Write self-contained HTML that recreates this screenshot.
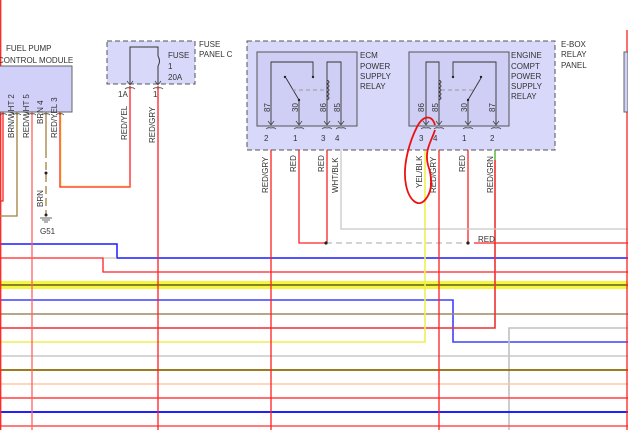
<!DOCTYPE html><html><head><style>body{margin:0;background:#fff}svg{display:block}text{font-family:"Liberation Sans",sans-serif;font-size:8px;fill:#333}</style></head><body>
<svg width="628" height="430" viewBox="0 0 628 430" xmlns="http://www.w3.org/2000/svg">
<g fill="none" stroke-width="1.3">
<path d="M0 244H117V258H628" stroke="#1a1aff" stroke-width="1.5"/>
<path d="M0 258H117" stroke="#b0a070" stroke-width="0.8"/>
<path d="M0 258H103V272H628" stroke="#ff2020"/>
<rect x="0" y="281" width="628" height="8" fill="#f6f640" stroke="none"/>
<path d="M0 285H628" stroke="#606020" stroke-width="1.5"/>
<path d="M0 300H453V342H628" stroke="#4040ff" stroke-width="1.6"/>
<path d="M0 314H628" stroke="#a08860" stroke-width="1.6"/>
<path d="M0 328H495V160" stroke="#ee3030" stroke-width="1.6"/>
<path d="M495 160V125" stroke="#40b020"/>
<path d="M0 342H425V125" stroke="#eeee50" stroke-width="1.6"/>
<path d="M628 328H509V430" stroke="#c0c0c0" stroke-width="1.6"/>
<path d="M0 356H628" stroke="#c8c8c8" stroke-width="1.6"/>
<path d="M0 370H628" stroke="#906800" stroke-width="1.8"/>
<path d="M0 384H628" stroke="#ffc8a0" stroke-width="1.6"/>
<path d="M0 398H628" stroke="#ff4040" stroke-width="1.6"/>
<path d="M0 412H628" stroke="#2020ff" stroke-width="2"/>
<path d="M0 426H628" stroke="#ff5050" stroke-width="1.6"/>
<path d="M0.7 0V430" stroke="#ff2020"/>
<path d="M3 112V201H0" stroke="#ff2020"/>
<path d="M17 112V216H0" stroke="#a08040"/>
<path d="M32 112V430" stroke="#ff6060"/>
<path d="M46 112V150" stroke="#a08040"/>
<path d="M46 150V215" stroke="#a08040" stroke-dasharray="8 4"/>
<path d="M60 112V187H130V86" stroke="#ff2020"/>
<path d="M61 112V186H130" stroke="#f0e000" stroke-width="0.6"/>
<path d="M158 86V430" stroke="#ff2020"/>
<path d="M271 128V430" stroke="#ff2020"/>
<path d="M299 128V243H326M474 243H628" stroke="#ff2020"/>
<path d="M327 128V243" stroke="#ff2020"/>
<path d="M326 243H468" stroke="#bbb" stroke-dasharray="6 4"/>
<path d="M468 128V243" stroke="#ff2020"/>
<path d="M341 128V229H628" stroke="#c8c8c8"/>
<path d="M439 128V430" stroke="#ff2020"/>
<path d="M627 30V430" stroke="#ff2020"/>
</g>
<g fill="#222"><circle cx="46" cy="173" r="1.5"/><circle cx="46" cy="215" r="1.5"/><circle cx="326" cy="243" r="1.6"/><circle cx="468" cy="243" r="1.6"/></g>
<path d="M40 218H52M42 220H50M44 222H48" stroke="#333" stroke-width="0.8"/>
<rect x="-2" y="66" width="74" height="46" fill="#d0d0f8" stroke="#666" stroke-width="1"/>
<text x="6" y="51">FUEL PUMP</text><text x="-2" y="63">CONTROL MODULE</text>
<rect x="107" y="41" width="88" height="43" fill="#d8d8fa" stroke="#555" stroke-dasharray="5 3"/>
<path d="M130 84V47H158V56M158 66V84" fill="none" stroke="#333"/>
<path d="M158 56q3 5 0 10" fill="none" stroke="#333"/>
<text x="168" y="58">FUSE</text><text x="168" y="69">1</text><text x="168" y="80">20A</text>
<text x="199" y="47">FUSE</text><text x="199" y="57">PANEL C</text>
<text x="118" y="97">1A</text><text x="153" y="97">1</text>
<rect x="247" y="41" width="308" height="109" fill="#d8d8fa" stroke="#555" stroke-dasharray="5 3"/>
<rect x="257" y="52" width="100" height="74" fill="#cfcff5" stroke="#555"/>
<rect x="409" y="52" width="100" height="74" fill="#cfcff5" stroke="#555"/>
<g fill="none" stroke="#333" stroke-width="0.9">
<path d="M271 124V62H313V76M299 124V100L286 78M327 124V62H341V124"/>
<path d="M327 80q4 2 0 4q4 2 0 4q4 2 0 4q4 2 0 4q4 2 0 4"/>
<path d="M426 124V62H439V124M468 124V100L481 78M496 124V62H453V76"/>
<path d="M439 80q4 2 0 4q4 2 0 4q4 2 0 4q4 2 0 4q4 2 0 4"/>
</g>
<g fill="none" stroke="#444" stroke-width="0.8">
<path d="M268 121l3 4 3-4M296 121l3 4 3-4M324 121l3 4 3-4M338 121l3 4 3-4M423 121l3 4 3-4M436 121l3 4 3-4M465 121l3 4 3-4M493 121l3 4 3-4"/>
<path d="M266 129q2-2 5-1 3-1 5 1M294 129q2-2 5-1 3-1 5 1M322 129q2-2 5-1 3-1 5 1M336 129q2-2 5-1 3-1 5 1M421 129q2-2 5-1 3-1 5 1M434 129q2-2 5-1 3-1 5 1M463 129q2-2 5-1 3-1 5 1M491 129q2-2 5-1 3-1 5 1"/>
<path d="M127 81l3 4 3-4M155 81l3 4 3-4M125 89q2-2 5-1 3-1 5 1M153 89q2-2 5-1 3-1 5 1"/>
<path d="M0 115q2-2 3-1 2-1 4 1M13 115q2-2 4-1 2-1 4 1M28 115q2-2 4-1 2-1 4 1M42 115q2-2 4-1 2-1 4 1M56 115q2-2 4-1 2-1 4 1"/>
</g>
<path d="M292 90H326M441 90H474" stroke="#999" stroke-dasharray="4 3"/>
<g fill="#222"><circle cx="285" cy="77" r="1.2"/><circle cx="313" cy="77" r="1.2"/><circle cx="299" cy="100" r="1.2"/><circle cx="453" cy="77" r="1.2"/><circle cx="481" cy="77" r="1.2"/><circle cx="468" cy="100" r="1.2"/></g>
<text x="360" y="58">ECM</text><text x="360" y="69">POWER</text><text x="360" y="79">SUPPLY</text><text x="360" y="89">RELAY</text>
<text x="511" y="58">ENGINE</text><text x="511" y="69">COMPT</text><text x="511" y="79">POWER</text><text x="511" y="89">SUPPLY</text><text x="511" y="99">RELAY</text>
<text x="561" y="47">E-BOX</text><text x="561" y="57">RELAY</text><text x="561" y="68">PANEL</text>
<text x="264" y="141">2</text><text x="293" y="141">1</text><text x="321" y="141">3</text><text x="335" y="141">4</text>
<text x="419" y="141">3</text><text x="433" y="141">4</text><text x="462" y="141">1</text><text x="490" y="141">2</text>
<rect x="624" y="52" width="4" height="60" fill="#d0d0f8" stroke="#666"/>
<text x="478" y="242">RED</text>
<g font-size="7.5">
<text transform="translate(14,138) rotate(-90)">BRN/WHT 2</text>
<text transform="translate(29,138) rotate(-90)">RED/WHT 5</text>
<text transform="translate(43,124) rotate(-90)">BRN 4</text>
<text transform="translate(57,138) rotate(-90)">RED/YEL 3</text>
<text transform="translate(43,207) rotate(-90)">BRN</text>
<text transform="translate(127,140) rotate(-90)">RED/YEL</text>
<text transform="translate(155,143) rotate(-90)">RED/GRY</text>
<text transform="translate(268,193) rotate(-90)">RED/GRY</text>
<text transform="translate(296,172) rotate(-90)">RED</text>
<text transform="translate(324,172) rotate(-90)">RED</text>
<text transform="translate(338,193) rotate(-90)">WHT/BLK</text>
<text transform="translate(422,188) rotate(-90)">YEL/BLK</text>
<text transform="translate(436,193) rotate(-90)">RED/GRY</text>
<text transform="translate(465,172) rotate(-90)">RED</text>
<text transform="translate(493,193) rotate(-90)">RED/GRN</text>
<g font-size="6.5">
<text transform="translate(270,112) rotate(-90)">87</text>
<text transform="translate(298,112) rotate(-90)">30</text>
<text transform="translate(326,112) rotate(-90)">86</text>
<text transform="translate(340,112) rotate(-90)">85</text>
<text transform="translate(424,112) rotate(-90)">86</text>
<text transform="translate(438,112) rotate(-90)">85</text>
<text transform="translate(467,112) rotate(-90)">30</text>
<text transform="translate(495,112) rotate(-90)">87</text>
</g>
</g>
<text x="40" y="234">G51</text>
<path d="M435 125C432 115 424 115 418 125C410 140 402 165 406 185C409 200 418 208 425 200C432 192 433 180 428 165C424 150 432 140 435 130" fill="none" stroke="#ee1111" stroke-width="1.8"/>
</svg></body></html>
